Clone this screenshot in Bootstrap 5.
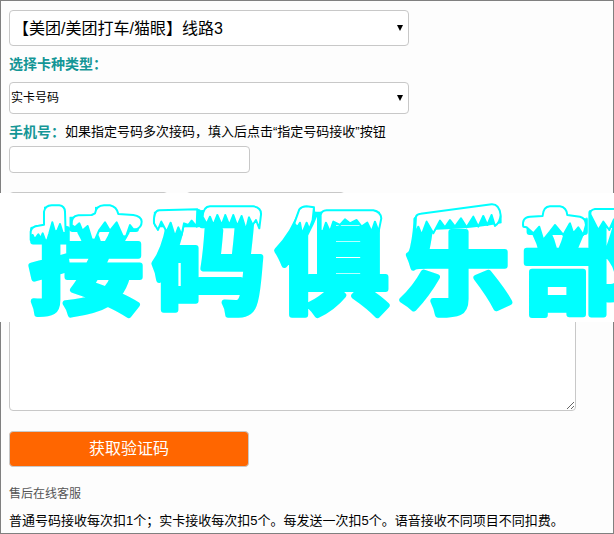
<!DOCTYPE html>
<html lang="zh-CN">
<head>
<meta charset="utf-8">
<meta name="viewport" content="width=device-width, initial-scale=1">
<title>接码俱乐部</title>
<link href="https://cdn.jsdelivr.net/npm/bootstrap@5.3.0/dist/css/bootstrap.min.css" rel="stylesheet">
<style>
body { font-family: "Liberation Sans", "Noto Sans CJK SC", sans-serif; font-size: 13px; line-height: 20px; color: #000; background: #fdfdfd; }
.page-frame { border: 1px solid #808080; min-height: 100vh; padding: 9px 8px 2px; }
.line-field { border: 1px solid #c8c8c8; border-radius: 4px; background-color: #fff; color: #000; }
.pick { appearance: none; width: 400px; max-width: 100%; background: #fff url("data:image/svg+xml,%3Csvg xmlns='http://www.w3.org/2000/svg' viewBox='0 0 6 6'%3E%3Cpath d='M0 0h6L3 6z'/%3E%3C/svg%3E") no-repeat right 5px center / 6px 6px; }
.pick-line { height: 36px; font-size: 16px; padding: 2px 20px 0 3px; }
.pick-card { height: 32px; font-size: 12px; padding: 0 20px 0 1px; }
.field-title { font-size: 14px; font-weight: 700; color: #149696; }
.phone-title .field-title { vertical-align: top; }
.phone { width: 241px; height: 27px; }
.results { padding-top: 19px; }
.actions { gap: 18px; }
.action { width: 159px; height: 36px; }
.result { height: 167px; width: 567px; max-width: 100%; resize: both; }
.banner { top: 1px; left: -9px; right: -9px; height: 129px; background: #fff; overflow: hidden; }
.banner svg { display: block; width: 660px; height: 130px; }
.banner text { font-family: "Noto Sans CJK SC", sans-serif; font-weight: 700; font-size: 114px; fill: #0ff; stroke: #0ff; stroke-width: 6px; stroke-linejoin: round; }
.snow path { fill: #fff; stroke: #0ff; stroke-width: 6px; stroke-linejoin: round; }
.get-code { width: 240px; height: 36px; margin-top: 20px; font-size: 16px; color: #fff; background: #f60; }
.service { margin-top: 17px; font-size: 12px; color: #555; }
.prices { margin: 7px 0 0; }
</style>
<script src="https://cdn.jsdelivr.net/npm/bootstrap@5.3.0/dist/js/bootstrap.bundle.min.js"></script>
</head>
<body>
<main class="page-frame">
  <form class="d-flex flex-column align-items-start">
    <select class="line-field pick pick-line" aria-label="线路"><option>【美团/美团打车/猫眼】线路3</option></select>
    <label class="field-title my-2" for="card">选择卡种类型：</label>
    <select class="line-field pick pick-card" id="card"><option>实卡号码</option></select>
    <label class="phone-title mt-2 mb-1" for="phone"><span class="field-title">手机号：</span>如果指定号码多次接码，填入后点击“指定号码接收”按钮</label>
    <input class="line-field phone" id="phone" type="text">
    <div class="results w-100">
      <div class="position-relative">
        <div class="actions d-flex pb-3">
          <button class="line-field action" type="button" aria-label="号码接收"></button>
          <button class="line-field action" type="button" aria-label="指定号码接收"></button>
        </div>
        <textarea class="line-field result d-block" aria-label="接收结果"></textarea>
        <div class="banner position-absolute">
          <svg viewBox="0 0 660 130" role="img" aria-label="接码俱乐部">
            <defs>
              <clipPath id="below-snow">
                <path transform="scale(.3333) translate(0 -9)" d="M70 420V110H132V50H198V80H285V50H350V80H432V110H445V65H592V52H783V110H820L900 55H945V65H1140V110H1215L1250 75L1475 45L1505 60V110H1560V85H1628V52H1700V85H1760V60H2000V420Z"/>
              </clipPath>
            </defs>
            <text x="29 152 276 399 522" y="111" clip-path="url(#below-snow)">接码俱乐部</text>
            <g class="snow" transform="scale(.3333) translate(0 -9)">
              <path d="M92 150V125Q95 108 115 107L132 104V65Q135 47 155 46H178Q194 48 195 65L197 130L188 128L180 102L172 122L165 125L157 97L148 130L142 150L136 152L128 130L122 145L115 133L104 148L98 135Z"/>
              <path d="M215 105Q213 78 235 76L275 75L285 70Q288 47 312 46H330Q350 50 355 72L400 75Q424 78 425 95Q425 112 408 118H400L390 105L378 140L368 138L350 97L330 122L315 97L298 120L285 150L275 148L263 108L247 122L238 100L225 112Z"/>
              <path d="M462 100Q460 62 478 61L592 58L590 110L575 92L565 105L552 100L545 135L535 112L525 140L512 98L500 125L484 95L474 120Z"/>
              <path d="M608 80Q610 50 630 49H760Q785 52 783 75L778 115L768 90L758 105L747 82L738 120L725 78L712 108L700 75L688 105L676 75L665 105L652 75L640 105L630 80L620 102Z"/>
              <g transform="translate(780 0)">
                <path d="M103 100L118 58Q125 50 140 49L162 52L158 90L148 118L140 98L126 132L120 98L112 112Z"/>
                <path d="M182 120V75Q185 62 200 61H340Q362 65 364 85L356 125L345 95L335 125L322 98L305 110L290 90L270 100L255 88L240 105L220 95L210 125L198 98L188 128Z"/>
                <path d="M465 135L468 80Q470 72 482 71L695 43Q718 42 722 75Q720 98 705 108L695 75L682 105L670 78L655 110L640 80L620 112L603 85L585 110L570 90L555 112L540 92L520 130L500 95L485 135L475 110Z"/>
                <path d="M790 110Q785 82 810 80L848 78Q850 50 870 49H900Q920 52 922 75L960 80Q978 85 978 105L970 135L955 112L940 130L930 100L910 135L885 105L870 125L850 150L838 110L820 130L800 112Z"/>
                <path d="M992 75Q988 60 1005 57H1110V100L1090 85L1078 120L1062 88L1048 120L1030 95L1015 120Z"/>
              </g>
            </g>
          </svg>
        </div>
      </div>
    </div>
    <button class="line-field get-code" id="get" type="button">获取验证码</button>
    <a class="service text-decoration-none" href="#">售后在线客服</a>
    <p class="prices">普通号码接收每次扣1个；实卡接收每次扣5个。每发送一次扣5个。语音接收不同项目不同扣费。</p>
  </form>
</main>
</body>
</html>
